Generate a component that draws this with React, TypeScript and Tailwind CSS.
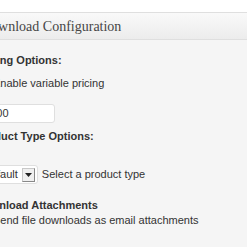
import React from "react"

const Checkbox = () => (
  <span className="inline-block w-[13px] h-[13px] border border-[#bbb] bg-white rounded-[2px] shrink-0" />
)

const Label = ({ children, className = "" }: { children: React.ReactNode; className?: string }) => (
  <p className={`font-bold text-[11px] leading-[13px] text-[#333] whitespace-nowrap ${className}`}>{children}</p>
)

export default function App() {
  return (
    <div className="w-[247px] h-[247px] overflow-hidden bg-white pt-[12px] font-['Liberation_Sans',Arial,sans-serif]">
      <div className="ml-[-35px] w-[320px] border border-[#dfdfdf] bg-[#f5f5f5] h-[260px]">
        <div className="h-[27px] border-b border-[#dfdfdf] bg-gradient-to-b from-[#f9f9f9] to-[#ececec] pl-[15px] flex items-center">
          <h3 className="font-['Liberation_Serif',Georgia,serif] text-[14px] leading-[17px] text-[#464646] whitespace-nowrap">
            Download Configuration
          </h3>
        </div>
        <div className="pl-[10px] pt-[14px]">
          <Label>Pricing Options:</Label>
          <label className="mt-[10px] flex items-center gap-[4px] text-[11px] leading-[13px] text-[#333] whitespace-nowrap">
            <Checkbox />
            Enable variable pricing
          </label>
          <div className="mt-[14px] w-[79px] h-[19px] bg-white border border-[#dfdfdf] rounded-[3px] px-[4px] flex items-center text-[11px] text-[#333]">
            10.00
          </div>
          <Label className="mt-[7px]">Product Type Options:</Label>
          <div className="mt-[22px] flex items-center gap-[4px] text-[11px] text-[#333] whitespace-nowrap">
            <div className="h-[19px] flex items-center bg-white border border-[#dfdfdf] rounded-[3px] pl-[6px] pr-[2px] gap-[4px]">
              <span>Default</span>
              <span className="w-[13px] h-[14px] flex items-center justify-center bg-[#f0f0f0] border border-[#c8c8c8] border-r-[#888] border-b-[#888]">
                <svg width="7" height="4" viewBox="0 0 7 4">
                  <path d="M0 0h7L3.5 4z" fill="#222" />
                </svg>
              </span>
            </div>
            <span>Select a product type</span>
          </div>
          <Label className="mt-[15px]">Download Attachments</Label>
          <label className="mt-[2px] flex items-center gap-[4px] text-[11px] leading-[13px] text-[#333] whitespace-nowrap">
            <Checkbox />
            Send file downloads as email attachments
          </label>
        </div>
      </div>
    </div>
  )
}
